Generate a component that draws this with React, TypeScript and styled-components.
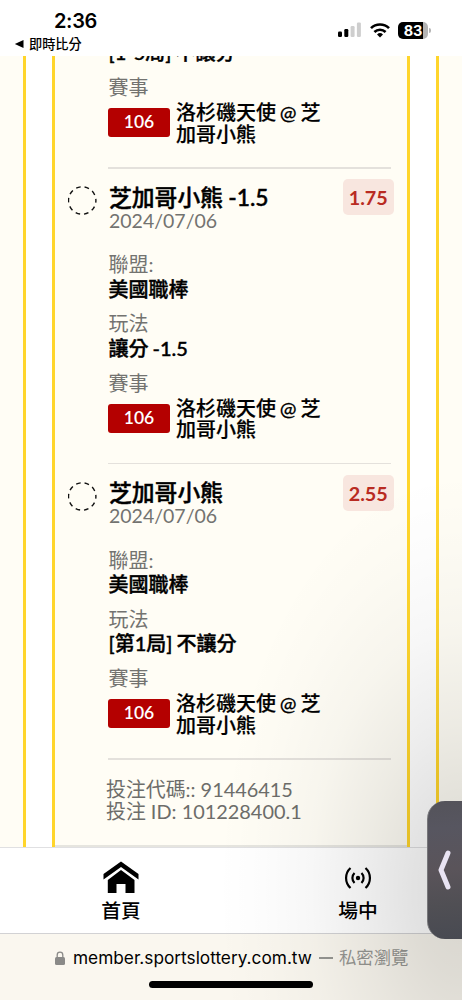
import React from "react";
import styled, { createGlobalStyle } from "styled-components";

const GlobalStyle = createGlobalStyle`
  * { box-sizing: border-box; }
  body { margin: 0; background: #fff; overflow: hidden; }
`;

const Screen = styled.div`
  position: relative;
  width: 462px;
  height: 1000px;
  display: flex;
  flex-direction: column;
  overflow: hidden;
  background: #fff;
  color: #000;
  font-family: Lato, "Noto Sans CJK TC", sans-serif;
`;

const StatusBar = styled.header`
  flex: none;
  height: 56px;
  display: flex;
  justify-content: space-between;
  padding: 9px 31px 0 14px;
  font-family: Inter, "Noto Sans CJK TC", sans-serif;
`;

const StatusLeft = styled.div`
  display: flex;
  flex-direction: column;
`;

const Clock = styled.div`
  padding-left: 40px;
  font-size: 20px;
  font-weight: 600;
  line-height: 25px;
  letter-spacing: -0.35px;
`;

const BackLink = styled.div`
  display: flex;
  align-items: center;
  gap: 5px;
  height: 20px;
  font-size: 13.2px;
  font-weight: 500;
  line-height: 20px;
`;

const StatusIcons = styled.div`
  display: flex;
  align-items: center;
  height: 26px;
  margin-top: 8px;
`;

const Battery = styled.div`
  width: 30px;
  height: 17px;
  margin-left: 8px;
  border-radius: 5px;
  background: linear-gradient(90deg, #000 25px, #b4b4b4 25px);
  color: #fff;
  font-size: 14.5px;
  font-weight: 700;
  line-height: 17px;
  text-align: center;
  letter-spacing: -0.2px;
`;

const BatteryCap = styled.div`
  width: 2px;
  height: 5px;
  margin-left: 1px;
  border-radius: 0 2px 2px 0;
  background: #b4b4b4;
`;

const Page = styled.main`
  flex: none;
  height: 791px;
  display: flex;
`;

const Edge = styled.div<{ $side: "left" | "right" }>`
  width: 26px;
  background: #fffdf5;
  ${(p) => (p.$side === "left" ? "border-right" : "border-left")}: 3px solid #ffd52b;
`;

const Ticket = styled.section`
  width: 358px;
  margin: 0 26px;
  border: solid #ffd52b;
  border-width: 0 3px;
  background: #fffdf5;
  display: flex;
  flex-direction: column;
  justify-content: flex-end;
  overflow: hidden;
`;

const Leg = styled.article`
  flex: none;
  display: flex;
  padding-left: 13px;
`;

const Marker = styled.div`
  flex: none;
  width: 28px;
  margin-right: 12px;
  padding-top: 18px;
`;

const LegBody = styled.div`
  width: 300px;
  padding-right: 14px;
`;

const Rule = styled.div`
  width: 283px;
  height: 1.5px;
  background: #e4e1dc;
`;

const LegHead = styled.div`
  display: flex;
  justify-content: space-between;
  width: 286px;
  height: 83.5px;
  padding: 10.5px 0 0 1px;
`;

const TitleBlock = styled.div`
  padding-top: 5.5px;
`;

const Title = styled.h2`
  margin: 0;
  font-size: 22.8px;
  font-weight: 500;
  -webkit-text-stroke: 0.45px #000;
  word-spacing: -0.5px;
  line-height: 25px;
`;

const DateText = styled.div`
  color: #737370;
  font-size: 19.5px;
  line-height: 22px;
`;

const Odds = styled.div`
  width: 51.5px;
  height: 36px;
  border-radius: 5px;
  background: #f8e6df;
  color: #b92b22;
  font-size: 19.8px;
  font-weight: 700;
  line-height: 36px;
  text-align: center;
`;

const Field = styled.div`
  height: 59.25px;
  padding-left: 0.5px;
`;

const Label = styled.div`
  color: #737370;
  font-size: 20px;
  font-weight: 400;
  line-height: 24.5px;
`;

const Value = styled.div`
  font-size: 20px;
  font-weight: 500;
  -webkit-text-stroke: 0.4px #000;
  word-spacing: -1px;
  line-height: 25px;
`;

const EventField = styled.div`
  height: 92px;
`;

const EventLabel = styled(Label)`
  padding-left: 0.5px;
`;

const EventRow = styled.div`
  display: flex;
  align-items: flex-start;
  gap: 6px;
  padding-top: 2.5px;
`;

const Code = styled.div`
  flex: none;
  width: 62px;
  height: 29px;
  margin-top: 6px;
  border-radius: 3px;
  background: #b40000;
  color: #fff;
  font-size: 17.5px;
  font-weight: 600;
  line-height: 28px;
  text-align: center;
`;

const Teams = styled.div`
  width: 160px;
  font-size: 20px;
  font-weight: 500;
  -webkit-text-stroke: 0.2px #000;
  word-spacing: -1.2px;
  line-height: 21.5px;
  white-space: nowrap;
`;

const Receipt = styled.div`
  flex: none;
  height: 89px;
  padding-left: 53px;
  border-bottom: 2px solid #e6e5df;
`;

const ReceiptLines = styled.div`
  padding: 18px 0 0 0;
  margin-left: -2px;
  color: #6d6d6a;
  font-size: 19.9px;
  line-height: 22px;
`;

const TabBar = styled.nav`
  flex: none;
  height: 87px;
  display: flex;
  border-top: 1.5px solid #e0e0e2;
  border-bottom: 1.5px solid #d2d2d4;
  background: #fff;
`;

const Tab = styled.div<{ $width: number }>`
  flex: none;
  width: ${(p) => p.$width}px;
  display: flex;
  flex-direction: column;
  align-items: center;
  padding-top: 11px;
  font-size: 19.8px;
  font-weight: 500;
  line-height: 28px;
`;

const TabIcon = styled.div`
  height: 37px;
  display: flex;
  align-items: center;
`;

const AddressBar = styled.footer`
  flex: 1;
  display: flex;
  flex-direction: column;
  background: #faf7ef;
  font-family: Inter, "Noto Sans CJK TC", sans-serif;
`;

const Address = styled.div`
  display: flex;
  align-items: center;
  height: 47px;
  padding-left: 55px;
  font-size: 17.25px;
  line-height: 24px;
  white-space: nowrap;
`;

const Host = styled.span`
  margin-left: 8px;
`;

const Mode = styled.span`
  margin-left: 7px;
  color: #969692;
  font-size: 17.4px;
`;

const Dash = styled.span`
  display: inline-block;
  width: 14px;
  height: 1.5px;
  margin: 0 6px 5px 0;
  background: #969692;
`;

const HomeIndicator = styled.div`
  width: 164px;
  height: 7px;
  margin: 0 auto;
  border-radius: 4px;
  background: #000;
`;

const Shade = styled.div`
  position: absolute;
  inset: 400px 0 0 180px;
  pointer-events: none;
  background: radial-gradient(ellipse 245px 420px at 100% 490px, rgba(0, 0, 0, 0.14) 0%, rgba(0, 0, 0, 0.115) 20%, rgba(0, 0, 0, 0.07) 40%, rgba(0, 0, 0, 0.03) 62%, rgba(0, 0, 0, 0.01) 82%, transparent 100%);
`;

const Handle = styled.div`
  position: absolute;
  right: 0;
  top: 801px;
  width: 35px;
  height: 138px;
  border-radius: 18px 0 0 18px;
  background: linear-gradient(175deg, #54535a 0%, #575660 20%, #5a545a 50%, #504f54 75%, #484a52 100%);
  border-left: 1px solid #77777a;
  display: flex;
  align-items: center;
  padding-left: 9px;
`;

const Dashed = () => (
  <svg width="30" height="30" viewBox="0 0 30 30" fill="none">
    <circle cx="14.2" cy="15.5" r="13.7" stroke="#111" strokeWidth="1.4" strokeDasharray="4.6 4.01" strokeDashoffset="2.3" />
  </svg>
);

const Event = () => (
  <EventField>
    <EventLabel>賽事</EventLabel>
    <EventRow>
      <Code>106</Code>
      <Teams>
        洛杉磯天使 @ 芝<br />加哥小熊
      </Teams>
    </EventRow>
  </EventField>
);

const legs = [
  { title: "芝加哥小熊 -1.5", odds: "1.75", play: "讓分 -1.5" },
  { title: "芝加哥小熊", odds: "2.55", play: "[第1局] 不讓分" },
];

export default function App() {
  return (
    <Screen lang="zh-Hant">
      <GlobalStyle />
      <StatusBar>
        <StatusLeft>
          <Clock>2:36</Clock>
          <BackLink>
            <svg width="10" height="8" viewBox="0 0 10 8">
              <path d="M9.5 0v8L.8 4z" />
            </svg>
            即時比分
          </BackLink>
        </StatusLeft>
        <StatusIcons>
          <svg width="24" height="16" viewBox="0 0 24 16">
            <rect x="0" y="9.5" width="4" height="5.5" rx="1.2" />
            <rect x="6.3" y="7" width="4" height="8" rx="1.2" />
            <rect x="12.6" y="4" width="4" height="11" rx="1.2" fill="#cecece" />
            <rect x="18.9" y="0.5" width="4" height="14.5" rx="1.2" fill="#cecece" />
          </svg>
          <svg width="20" height="15" viewBox="0 0 20 15" fill="none" stroke="#000" strokeWidth="2.6" style={{ marginLeft: 8 }}>
            <path d="M1 5.2a12.8 12.8 0 0 1 18 0" />
            <path d="M4.4 9a8 8 0 0 1 11.2 0" />
            <path d="M10 14.5l-3-3a4.4 4.4 0 0 1 6 0z" fill="#000" stroke="none" />
          </svg>
          <Battery>83</Battery>
          <BatteryCap />
        </StatusIcons>
      </StatusBar>
      <Page>
        <Edge $side="left" />
        <Ticket>
          <Leg>
            <Marker />
            <LegBody>
              <Field>
                <Label>玩法</Label>
                <Value>[1-5局] 不讓分</Value>
              </Field>
              <Event />
            </LegBody>
          </Leg>
          {legs.map((leg) => (
            <Leg key={leg.title}>
              <Marker>
                <Dashed />
              </Marker>
              <LegBody>
                <Rule />
                <LegHead>
                  <TitleBlock>
                    <Title>{leg.title}</Title>
                    <DateText>2024/07/06</DateText>
                  </TitleBlock>
                  <Odds>{leg.odds}</Odds>
                </LegHead>
                <Field>
                  <Label>聯盟:</Label>
                  <Value>美國職棒</Value>
                </Field>
                <Field>
                  <Label>玩法</Label>
                  <Value>{leg.play}</Value>
                </Field>
                <Event />
              </LegBody>
            </Leg>
          ))}
          <Receipt>
            <Rule />
            <ReceiptLines>
              <div>投注代碼:: 91446415</div>
              <div>投注 ID: 101228400.1</div>
            </ReceiptLines>
          </Receipt>
        </Ticket>
        <Edge $side="right" />
      </Page>
      <TabBar>
        <Tab $width={242}>
          <TabIcon>
            <svg width="36" height="33" viewBox="0 0 36 33">
              <path d="M18 .5L35.5 13v5.5L18 6 .5 18.5V13z" />
              <path d="M18 9L31.5 19v13H22.5v-9h-9v9H4.8V19z" />
            </svg>
          </TabIcon>
          首頁
        </Tab>
        <Tab $width={232}>
          <TabIcon>
            <svg width="28" height="22" viewBox="0 0 28 22" fill="none" stroke="#000" strokeWidth="2.2">
              <circle cx="14" cy="11" r="2.2" fill="#000" stroke="none" />
              <path d="M10.5 6a7 7 0 0 0 0 10M17.5 6a7 7 0 0 1 0 10M6.5 1a13.5 13.5 0 0 0 0 20M21.5 1a13.5 13.5 0 0 1 0 20" />
            </svg>
          </TabIcon>
          場中
        </Tab>
      </TabBar>
      <AddressBar>
        <Address>
          <svg width="10" height="14" viewBox="0 0 10 14">
            <rect x="0" y="6" width="10" height="8" rx="1.5" fill="#8a8a88" />
            <path d="M2.2 6.5V4a2.8 2.8 0 0 1 5.6 0v2.5" fill="none" stroke="#8a8a88" strokeWidth="1.3" />
          </svg>
          <Host>member.sportslottery.com.tw</Host>
          <Mode>
            <Dash />
            私密瀏覽
          </Mode>
        </Address>
        <HomeIndicator />
      </AddressBar>
      <Shade />
      <Handle>
        <svg width="15" height="40" viewBox="0 0 15 40" fill="none">
          <path d="M11 3L4 20l7 17" stroke="#e9e4f3" strokeWidth="5" strokeLinecap="round" strokeLinejoin="round" />
        </svg>
      </Handle>
    </Screen>
  );
}
